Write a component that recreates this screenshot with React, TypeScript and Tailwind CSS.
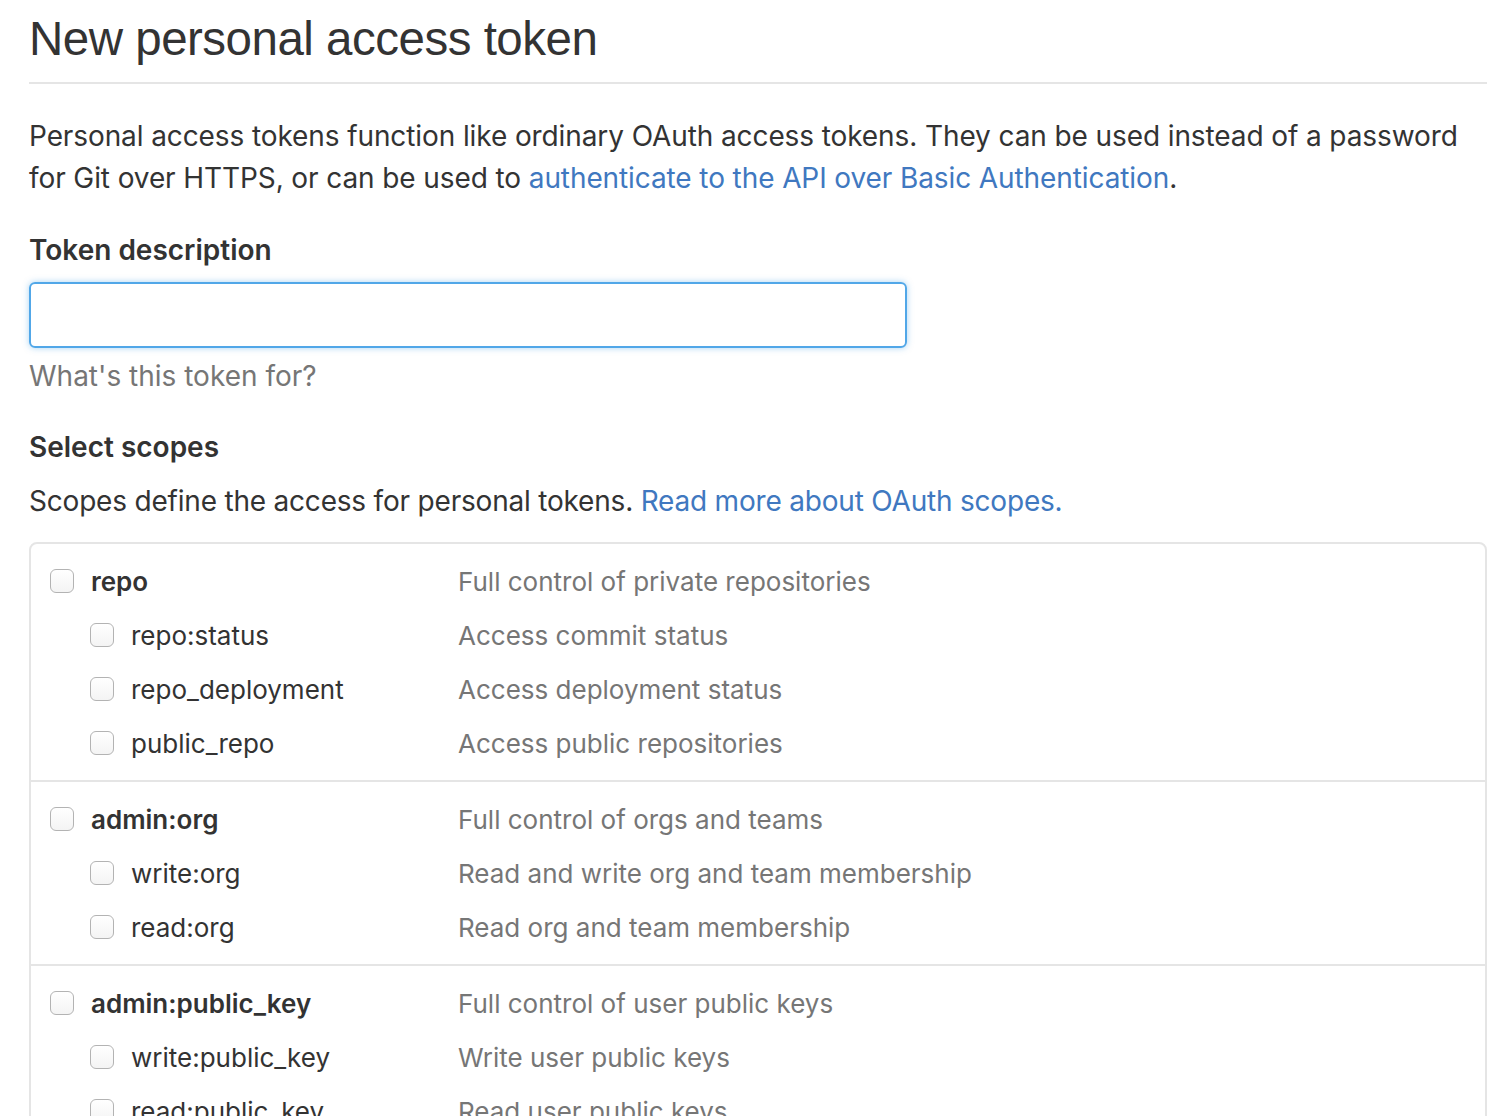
import React from "react";

type Scope = { name: string; desc: string; children: { name: string; desc: string }[] };

const scopes: Scope[] = [
  {
    name: "repo",
    desc: "Full control of private repositories",
    children: [
      { name: "repo:status", desc: "Access commit status" },
      { name: "repo_deployment", desc: "Access deployment status" },
      { name: "public_repo", desc: "Access public repositories" },
    ],
  },
  {
    name: "admin:org",
    desc: "Full control of orgs and teams",
    children: [
      { name: "write:org", desc: "Read and write org and team membership" },
      { name: "read:org", desc: "Read org and team membership" },
    ],
  },
  {
    name: "admin:public_key",
    desc: "Full control of user public keys",
    children: [
      { name: "write:public_key", desc: "Write user public keys" },
      { name: "read:public_key", desc: "Read user public keys" },
    ],
  },
];

function Box() {
  return (
    <span className="block w-[24px] h-[24px] shrink-0 rounded-[6px] border border-[#b3b3b3] bg-gradient-to-b from-white to-[#f4f4f4]" />
  );
}

export default function App() {
  return (
    <div
      className="bg-white text-[#333] pl-[29px] pr-[17px] h-[1116px] overflow-hidden"
      style={{ fontFamily: "Inter, 'Noto Sans', sans-serif" }}
    >
      <h1
        className="text-[47.5px] leading-[78px] font-normal text-[#333] border-b-2 border-[#e5e5e5] pb-[4px] tracking-[-0.5px]"
        style={{ fontFamily: "'Liberation Sans', Arial, sans-serif" }}
      >
        New personal access token
      </h1>
      <p className="text-[28px] leading-[42px] mt-[31px] tracking-[-0.1px]">
        Personal access tokens function like ordinary OAuth access tokens. They can be used instead of a password for Git over HTTPS, or can be used to{" "}
        <a className="text-[#4078c0]">authenticate to the API over Basic Authentication</a>.
      </p>
      <div className="mt-[30px] text-[28px] leading-[42px] font-semibold">Token description</div>
      <div className="mt-[11px] w-[878px] h-[66px] rounded-[6px] border-2 border-[#51a7e8] shadow-[0_0_6px_rgba(81,167,232,0.5)]" />
      <div className="mt-[7px] text-[28px] leading-[42px] text-[#767676]">What's this token for?</div>
      <div className="mt-[29px] text-[28px] leading-[42px] font-semibold">Select scopes</div>
      <p className="mt-[12px] text-[28px] leading-[42px] tracking-[-0.2px]">
        Scopes define the access for personal tokens. <a className="text-[#4078c0]">Read more about OAuth scopes.</a>
      </p>
      <div className="mt-[20px] border-2 border-[#e5e5e5] rounded-[8px] w-[1458px]">
        {scopes.map((s, i) => (
          <div key={s.name} className={"py-[10px] " + (i > 0 ? "border-t-2 border-[#e5e5e5]" : "")}>
            <div className="flex items-center h-[54px] pl-[19px]">
              <Box />
              <span className="w-[384px] pl-[17px] text-[26px] font-semibold">{s.name}</span>
              <span className="text-[26px] text-[#767676]">{s.desc}</span>
            </div>
            {s.children.map((c) => (
              <div key={c.name} className="flex items-center h-[54px] pl-[59px]">
                <Box />
                <span className="w-[344px] pl-[17px] text-[26px]">{c.name}</span>
                <span className="text-[26px] text-[#767676]">{c.desc}</span>
              </div>
            ))}
          </div>
        ))}
      </div>
    </div>
  );
}
